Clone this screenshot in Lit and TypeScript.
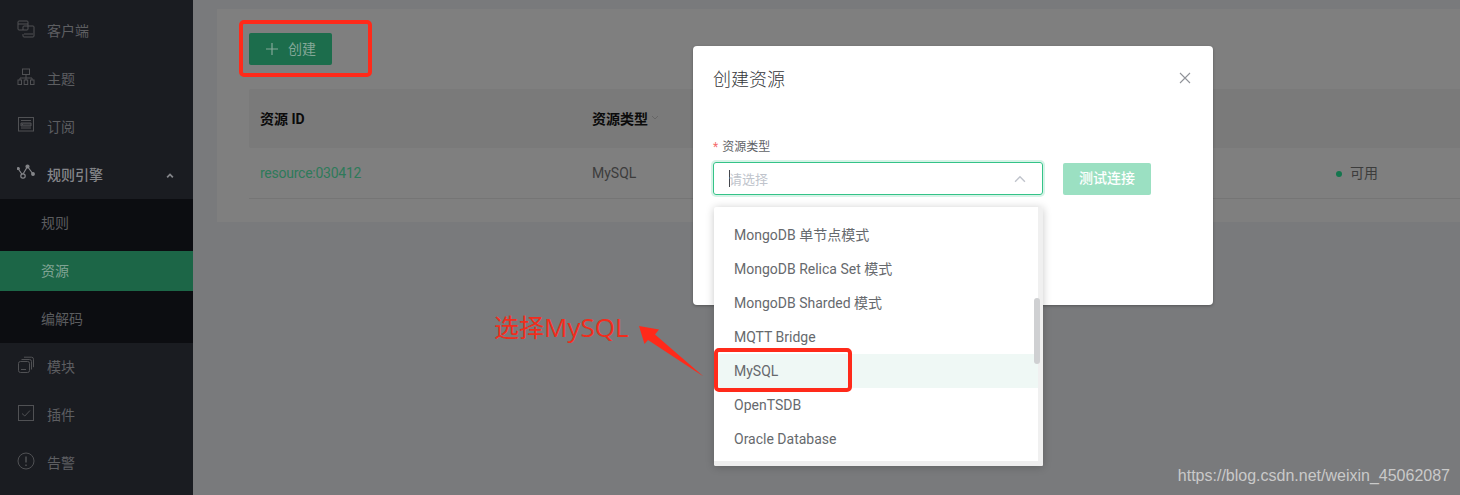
import { LitElement, html, css, svg } from "lit";
import { customElement } from "lit/decorators.js";

const ICONS: Record<string, unknown> = {
  client: svg`<rect x="1" y="1" width="10" height="9" rx="1"/><path d="M1 4h10"/><path d="M6 10V7a1 1 0 0 1 1-1h9a1 1 0 0 1 1 1v9a1 1 0 0 1-1 1H7a1 1 0 0 1-1-1v-2"/><path d="M7 14h9"/>`,
  topic: svg`<rect x="5.5" y="1" width="7" height="5.5"/><path d="M9 6.500V10M3 12v-2h12v2M9 10v2"/><rect x="1" y="12" width="3.500" height="4.500"/><rect x="7.200" y="12" width="3.500" height="4.500"/><rect x="13.500" y="12" width="3.500" height="4.500"/>`,
  sub: svg`<rect x="1.500" y="1.500" width="15" height="13.500"/><path d="M4 4.500h10M4 12h10"/><path d="M4 7h10v3H4z" fill="currentColor" fill-opacity=".45"/><path d="M5 8.500h1"/>`,
  rule: svg`<path d="M1 4.500 5.500 11 10.500 2.500 16 10"/><circle cx="6" cy="12" r="2.200" fill="#1a1c21"/><circle cx="10.500" cy="2.500" r="1.500" fill="currentColor"/><circle cx="16" cy="10" r="1.300" fill="currentColor"/><circle cx="1.300" cy="4.500" r="1" fill="currentColor"/>`,
  module: svg`<rect x="1.500" y="5.500" width="11" height="11" rx="2"/><path d="M4 13.500h5M4.500 3.500h8a2 2 0 0 1 2 2v8M7 1.200h7.500a2 2 0 0 1 2 2v8"/>`,
  plugin: svg`<rect x="1.500" y="1.500" width="15" height="15"/><path d="M5 9.500l2.800 2.500L13 6.500"/>`,
  alert: svg`<circle cx="9" cy="9" r="8"/><path d="M9 4.500v6M9 12.500v1.500" stroke-width="1.500"/>`,
};

interface Item { label: string; icon: string; open?: boolean; children?: { label: string; active?: boolean }[] }

const MENU: Item[] = [
  { label: "客户端", icon: "client" },
  { label: "主题", icon: "topic" },
  { label: "订阅", icon: "sub" },
  {
    label: "规则引擎",
    icon: "rule",
    open: true,
    children: [{ label: "规则" }, { label: "资源", active: true }, { label: "编解码" }],
  },
  { label: "模块", icon: "module" },
  { label: "插件", icon: "plugin" },
  { label: "告警", icon: "alert" },
];

const OPTIONS = [
  "MongoDB 单节点模式",
  "MongoDB Relica Set 模式",
  "MongoDB Sharded 模式",
  "MQTT Bridge",
  "MySQL",
  "OpenTSDB",
  "Oracle Database",
];

@customElement("app-root")
export class AppRoot extends LitElement {
  static styles = css`
    :host {
      display: block;
      position: relative;
      width: 1460px;
      height: 495px;
      overflow: hidden;
      background: #797a7c;
      font-family: Roboto, "Noto Sans CJK SC", sans-serif;
      font-size: 14px;
    }
    .layout { display: flex; height: 100%; }

    .side {
      width: 193px;
      flex: none;
      padding-top: 7px;
      background: #1a1c21;
      color: #5d5e61;
      box-sizing: border-box;
    }
    .item {
      display: flex;
      align-items: center;
      height: 48px;
      padding-left: 17px;
      gap: 12px;
    }
    .item span { margin-top: -2px; }
    .item.open { color: #85868a; font-weight: 500; }
    .ico {
      width: 18px;
      height: 18px;
      flex: none;
      margin-top: -4px;
      fill: none;
      stroke: #505154;
      stroke-width: 1;
      color: #505154;
    }
    .open .ico { stroke: #85868a; color: #85868a; stroke-width: 1.200; }
    .caret { width: 8px; height: 5px; margin-left: auto; margin-right: 19px; fill: none; stroke: #85868a; stroke-width: 2.500; }
    .subs {
      display: flex;
      flex-direction: column;
      gap: 8px;
      padding: 4px 0;
      background: #0c0d11;
    }
    .sub { height: 40px; line-height: 40px; padding-left: 41px; color: #5b5c5f; }
    .sub.active { background: #1c6647; color: #80a494; }

    .main { flex: 1; min-width: 0; padding: 9px 0 0 24px; }
    .card {
      height: 213px;
      background: #7f7f7f;
      padding: 24px 0 0 32px;
      box-sizing: border-box;
    }
    .create {
      display: inline-flex;
      align-items: center;
      gap: 9px;
      width: 83px;
      height: 32px;
      padding-left: 16px;
      box-sizing: border-box;
      background: #1c6d4c;
      border-radius: 2px;
      color: #84a898;
    }
    .create span { margin-top: -2px; }
    .plus { width: 14px; height: 14px; stroke: #84a898; stroke-width: 1.200; fill: none; }

    .table { margin-top: 24px; }
    .row {
      display: grid;
      grid-template-columns: 332px 744px 1fr;
      align-items: center;
    }
    .row.head {
      height: 59px;
      background: #7a7a7a;
      color: #0b0b0b;
      font-weight: 700;
      border-radius: 2px 0 0 2px;
    }
    .row.head .cell { margin-top: -2px; }
    .row.body { height: 50px; border-bottom: 1px solid #757575; color: #3c3c3c; }
    .cell { padding-left: 11px; display: flex; align-items: center; }
    .link { color: #2e7a5a; letter-spacing: -0.25px; }
    .status { margin-top: -2px; }
    .sort { width: 8px; height: 6px; margin-left: 3px; fill: none; stroke: #666; stroke-width: 1; }
    .dot { width: 6px; height: 6px; border-radius: 50%; background: #14764e; margin-right: 8px; margin-top: 3px; }

    .modal {
      position: absolute;
      left: 693px;
      top: 46px;
      width: 520px;
      height: 259px;
      background: #fff;
      border-radius: 4px;
      box-shadow: 0 1px 3px rgba(0, 0, 0, 0.3);
      padding: 19px 20px;
      box-sizing: border-box;
      color: #303133;
    }
    .mhead { display: flex; justify-content: space-between; align-items: center; height: 26px; }
    .mtitle { font-size: 18px; color: #34363a; font-weight: 300; margin-top: -1px; }
    .close { width: 12px; height: 12px; margin-right: 2px; stroke: #909399; stroke-width: 1.100; fill: none; }
    .label { margin-top: 47px; font-size: 12px; line-height: 18px; color: #606266; display: flex; gap: 4px; }
    .star { color: #f56c6c; }
    .field { display: flex; gap: 20px; margin-top: 6px; }
    .select {
      width: 330px;
      height: 33px;
      box-sizing: border-box;
      border: 1px solid #34c388;
      border-radius: 3px;
      box-shadow: 0 0 0 2px #d6f3e7;
      display: flex;
      align-items: center;
      padding: 0 16px 0 15px;
      font-size: 13px;
      color: #c0c4cc;
    }
    .cursor { width: 1px; height: 17px; background: #44474d; margin-right: -1px; }
    .up { width: 12px; height: 8px; margin-left: auto; fill: none; stroke: #c0c4cc; stroke-width: 1.300; }
    .test {
      width: 88px;
      height: 32px;
      margin-top: 1px;
      background: #9be0c2;
      border-radius: 2px;
      color: #fff;
      text-align: center;
      line-height: 31px;
      font-weight: 500;
    }

    .drop {
      position: absolute;
      left: 714px;
      top: 207px;
      width: 329px;
      height: 259px;
      box-sizing: border-box;
      background: #fff;
      border-radius: 2px;
      box-shadow: 0 1px 8px rgba(0, 0, 0, 0.22);
      padding: 11px 5px 0 0;
      overflow: hidden;
    }
    .notch {
      position: absolute;
      left: 750px;
      top: 203px;
      border: 5px solid transparent;
      border-top: 0;
      border-bottom: 4px solid #fff;
    }
    .opt { height: 34px; line-height: 34px; padding-left: 20px; color: #66696d; white-space: nowrap; }
    .opt.hover { background: #eff8f5; }
    .track-v { position: absolute; right: 0; top: 0; bottom: 0; width: 5px; background: #f0f0f0; }
    .track-h { position: absolute; left: 0; right: 0; bottom: 0; height: 5px; background: #eeeeee; }
    .thumb {
      position: absolute;
      right: 3px;
      top: 91px;
      width: 6px;
      height: 66px;
      border-radius: 3px;
      background: #cfd0d2;
    }

    .mark { position: absolute; border: 4px solid #ff2a1a; border-radius: 5px; box-sizing: border-box; }
    .mark.a { left: 239px; top: 20px; width: 133px; height: 57px; }
    .mark.b { left: 714px; top: 348px; width: 138px; height: 44px; }
    .note {
      position: absolute;
      left: 494px;
      top: 308px;
      font-family: "Noto Sans CJK SC", sans-serif;
      font-size: 25px;
      line-height: 36px;
      color: #f22c1c;
      white-space: nowrap;
    }
    .note b { font-family: "Open Sans", sans-serif; font-weight: 400; font-size: 26px; }
    .arrow { position: absolute; left: 630px; top: 320px; width: 80px; height: 60px; fill: #ff2a1a; }
    .water {
      position: absolute;
      right: 10px;
      bottom: 10px;
      font-family: "Liberation Sans", sans-serif;
      font-size: 16px;
      line-height: 18px;
      color: #c9c9c9;
    }
  `;

  private renderItem(m: Item) {
    return html`
      <div class="item ${m.open ? "open" : ""}">
        <svg class="ico" viewBox="0 0 18 18">${ICONS[m.icon]}</svg>
        <span>${m.label}</span>
        ${m.open ? html`<svg class="caret" viewBox="0 0 10 7"><path d="M1 6l4-4 4 4"/></svg>` : ""}
      </div>
      ${m.children
        ? html`<div class="subs">
            ${m.children.map((c) => html`<div class="sub ${c.active ? "active" : ""}">${c.label}</div>`)}
          </div>`
        : ""}
    `;
  }

  render() {
    return html`
      <div class="layout">
        <aside class="side">${MENU.map((m) => this.renderItem(m))}</aside>
        <main class="main">
          <section class="card">
            <div class="create">
              <svg class="plus" viewBox="0 0 14 14"><path d="M7 1v12M1 7h12"/></svg>
              <span>创建</span>
            </div>
            <div class="table">
              <div class="row head">
                <div class="cell">资源 ID</div>
                <div class="cell">资源类型<svg class="sort" viewBox="0 0 8 6"><path d="M1 1l3 3 3-3"/></svg></div>
                <div class="cell"></div>
              </div>
              <div class="row body">
                <div class="cell link">resource:030412</div>
                <div class="cell">MySQL</div>
                <div class="cell status"><i class="dot"></i>可用</div>
              </div>
            </div>
          </section>
        </main>
      </div>

      <div class="modal">
        <div class="mhead">
          <div class="mtitle">创建资源</div>
          <svg class="close" viewBox="0 0 12 12"><path d="M1 1l10 10M11 1L1 11"/></svg>
        </div>
        <div class="label"><span class="star">*</span><span>资源类型</span></div>
        <div class="field">
          <div class="select">
            <i class="cursor"></i><span>请选择</span>
            <svg class="up" viewBox="0 0 11 7"><path d="M1 6l4.500-4.500L10 6"/></svg>
          </div>
          <div class="test">测试连接</div>
        </div>
      </div>

      <div class="notch"></div>
      <div class="drop">
        ${OPTIONS.map((o) => html`<div class="opt ${o === "MySQL" ? "hover" : ""}">${o}</div>`)}
        <div class="track-v"></div>
        <div class="track-h"></div>
        <div class="thumb"></div>
      </div>

      <div class="mark a"></div>
      <div class="mark b"></div>
      <div class="note">选择<b>MySQL</b></div>
      <svg class="arrow" viewBox="0 0 80 60">
        <polygon points="9,6 29,9.500 25,14.500 73.500,56.500 18,20 14.500,24"/>
      </svg>
      <div class="water">https://blog.csdn.net/weixin_45062087</div>
    `;
  }
}
